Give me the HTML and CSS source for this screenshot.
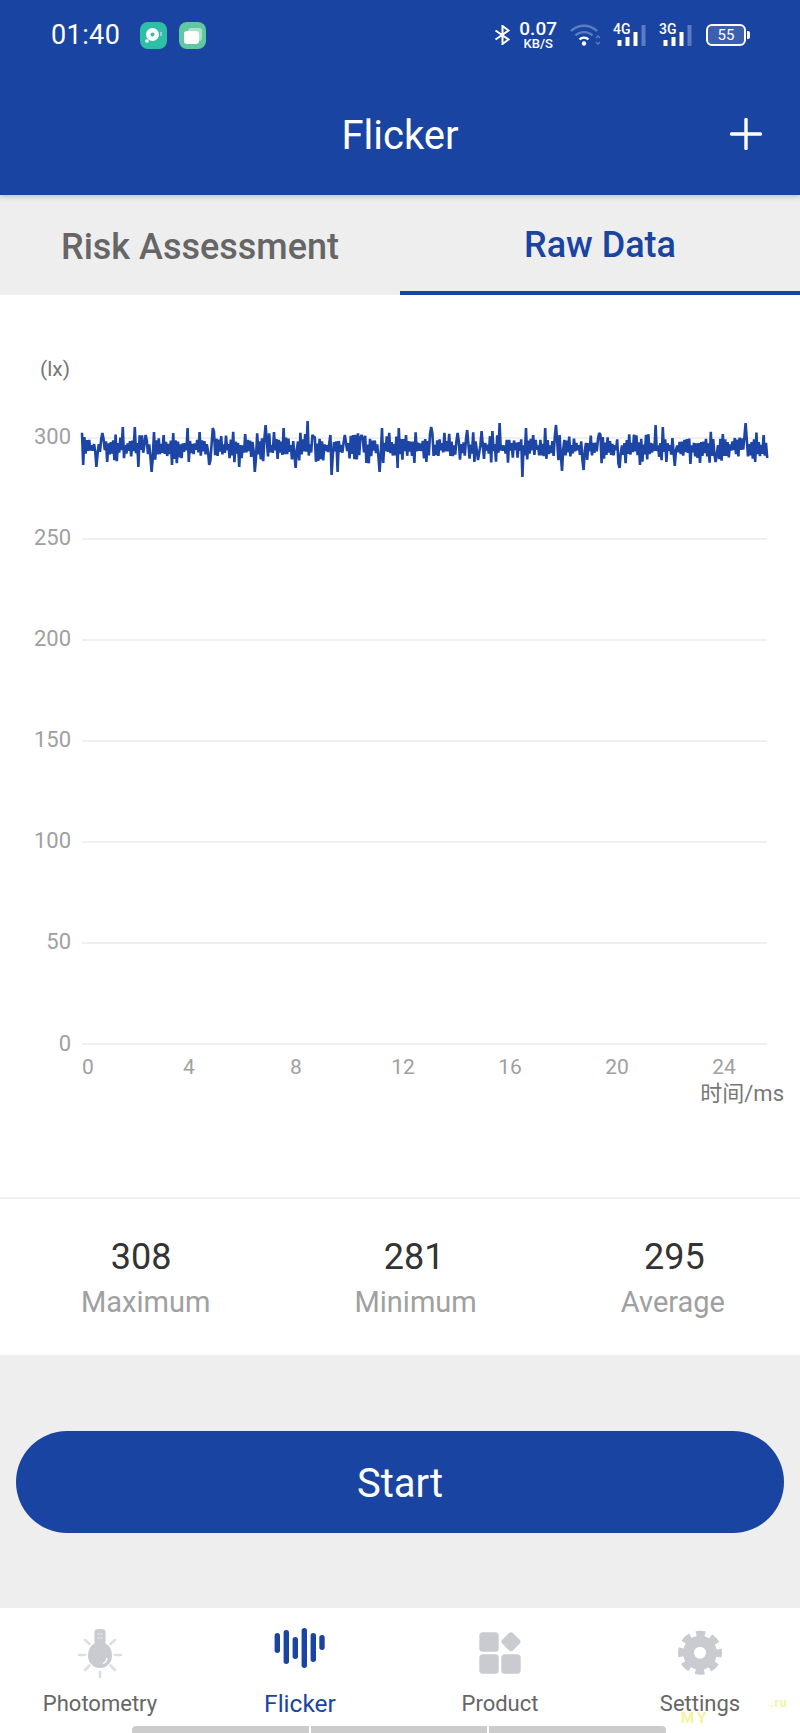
FILE: index.html
```html
<!DOCTYPE html>
<html lang="en">
<head>
  <meta charset="utf-8">
  <title>Flicker</title>
  <meta name="viewport" content="width=device-width, initial-scale=1.0">
  <link rel="stylesheet" href="styles.css">
</head>
<body>
  <div class="phone">
    <header class="top">
      <!-- status bar -->
      <div class="status">
        <div class="status-left">
          <span class="clock">01:40</span>
          <svg class="app-icon" viewBox="0 0 27 27">
            <rect width="27" height="27" rx="8" fill="#2fbfa6"/>
            <circle cx="12.5" cy="12.5" r="6.5" fill="#fff"/>
            <circle cx="12.5" cy="12.5" r="2" fill="#2fbfa6"/>
            <circle cx="7" cy="19" r="1.8" fill="#fff"/>
            <rect x="20.5" y="10" width="1" height="4" fill="#d8f5ef"/>
          </svg>
          <svg class="app-icon" viewBox="0 0 27 27">
            <rect width="27" height="27" rx="8" fill="#5fc8a0"/>
            <rect x="9" y="6" width="14" height="13" rx="3" fill="#a6e3cb"/>
            <rect x="5" y="9" width="15" height="13" rx="3" fill="#fff"/>
          </svg>
        </div>
        <div class="status-right">
          <svg class="bt" viewBox="0 0 17 20">
            <path d="M1.5 5.5 L14.5 14.5 L8.5 19 V1 L14.5 5.5 L1.5 14.5" fill="none" stroke="#fff" stroke-width="2"/>
          </svg>
          <div class="speed">
            <span class="speed-num">0.07</span>
            <span class="speed-unit">KB/S</span>
          </div>
          <svg class="wifi" viewBox="0 0 30 22">
            <path d="M1 7 C8 0 20 0 27 7" fill="none" stroke="#5c7dc3" stroke-width="2.4"/>
            <path d="M5.5 11.5 C10 7 18 7 22.5 11.5" fill="none" stroke="#5c7dc3" stroke-width="2.4"/>
            <path d="M9.5 15.5 C12 13 16 13 18.5 15.5" fill="none" stroke="#fff" stroke-width="2.4"/>
            <circle cx="14" cy="19.5" r="2.2" fill="#fff"/>
            <path d="M26 14 l2 -2 l2 2 M26 18 l2 2 l2 -2" fill="none" stroke="#5c7dc3" stroke-width="1.4"/>
          </svg>
          <div class="signal">
            <span class="signal-text">4G</span>
            <svg class="signal-bars" viewBox="0 0 34 23">
              <rect x="4.5" y="16" width="4" height="6" fill="#fff"/>
              <rect x="12.5" y="13" width="4" height="9" fill="#fff"/>
              <rect x="20.5" y="8" width="4" height="14" fill="#fff"/>
              <rect x="28.5" y="1" width="4" height="21" fill="#5c7dc3"/>
            </svg>
          </div>
          <div class="signal">
            <span class="signal-text">3G</span>
            <svg class="signal-bars" viewBox="0 0 34 23">
              <rect x="4.5" y="16" width="4" height="6" fill="#fff"/>
              <rect x="12.5" y="13" width="4" height="9" fill="#fff"/>
              <rect x="20.5" y="8" width="4" height="14" fill="#fff"/>
              <rect x="28.5" y="1" width="4" height="21" fill="#5c7dc3"/>
            </svg>
          </div>
          <div class="battery"><span class="battery-level">55</span></div>
        </div>
      </div>
      <!-- title bar -->
      <div class="appbar">
        <h1 class="title">Flicker</h1>
        <svg class="plus" viewBox="0 0 32 32">
          <path d="M16 1.5 V30.5 M1.5 16 H30.5" stroke="#fff" stroke-width="3.4" stroke-linecap="round"/>
        </svg>
      </div>
    </header>

    <nav class="tabs">
      <div class="tab">Risk Assessment</div>
      <div class="tab tab-active">Raw Data</div>
    </nav>

    <!-- chart; the trace is filled in by chart.js -->
    <section class="chart">
      <svg class="chart-svg" viewBox="0 0 800 902">
        <g class="grid">
          <line x1="82" x2="767" y1="143" y2="143"/>
          <line x1="82" x2="767" y1="244" y2="244"/>
          <line x1="82" x2="767" y1="345" y2="345"/>
          <line x1="82" x2="767" y1="446" y2="446"/>
          <line x1="82" x2="767" y1="547" y2="547"/>
          <line x1="82" x2="767" y1="648" y2="648"/>
          <line x1="82" x2="767" y1="749" y2="749"/>
        </g>
        <text class="unit" x="40" y="81">(lx)</text>
        <g class="y-labels">
          <text x="71" y="149">300</text>
          <text x="71" y="250">250</text>
          <text x="71" y="351">200</text>
          <text x="71" y="452">150</text>
          <text x="71" y="553">100</text>
          <text x="71" y="654">50</text>
          <text x="71" y="756">0</text>
        </g>
        <g class="x-labels">
          <text x="88" y="779">0</text>
          <text x="189" y="779">4</text>
          <text x="296" y="779">8</text>
          <text x="403" y="779">12</text>
          <text x="510" y="779">16</text>
          <text x="617" y="779">20</text>
          <text x="724" y="779">24</text>
        </g>
        <text class="x-unit" x="784" y="806">时间/ms</text>
        <polyline id="trace" class="trace" points=""/>
      </svg>
    </section>

    <section class="stats">
      <div class="stat"><span class="stat-value">308</span><span class="stat-label">Maximum</span></div>
      <div class="stat"><span class="stat-value">281</span><span class="stat-label">Minimum</span></div>
      <div class="stat"><span class="stat-value">295</span><span class="stat-label">Average</span></div>
    </section>

    <main class="action">
      <button class="start">Start</button>
    </main>

    <footer class="bottom-nav">
      <div class="nav-item">
        <svg class="nav-icon" viewBox="0 0 60 60">
          <g stroke="#dcdde1" stroke-width="2.6" stroke-linecap="round">
            <path d="M9 33 H15 M45 33 H51 M15 18 L19.5 22 M45 18 L40.5 22 M15 48 L19.5 43.5 M45 48 L40.5 43.5 M30 50 V55"/>
          </g>
          <path d="M24.5 9 Q24.5 7 30 7 Q35.5 7 35.5 9 V21.5 Q42 25 42 34 A12 12 0 0 1 18 34 Q18 25 24.5 21.5 Z" fill="#c9cbd1"/>
          <path d="M27 12 H33 M27 16 H33" stroke="#e6e7ea" stroke-width="1"/>
          <path d="M37 36 Q36.5 40 33 41.5" fill="none" stroke="#fff" stroke-width="1.4"/>
        </svg>
        <span class="nav-label">Photometry</span>
      </div>
      <div class="nav-item nav-active">
        <svg class="nav-icon" viewBox="0 0 60 60">
          <g fill="#1a44a1">
            <rect x="4.6" y="11" width="5.4" height="20" rx="2.7"/>
            <rect x="13.6" y="8" width="5.4" height="34" rx="2.7"/>
            <rect x="22.6" y="15" width="5.4" height="22" rx="2.7"/>
            <rect x="31.6" y="6" width="5.4" height="40" rx="2.7"/>
            <rect x="40.6" y="11" width="5.4" height="29" rx="2.7"/>
            <rect x="49.3" y="13" width="5.4" height="15" rx="2.7"/>
          </g>
        </svg>
        <span class="nav-label">Flicker</span>
      </div>
      <div class="nav-item">
        <svg class="nav-icon" viewBox="0 0 60 60">
          <g fill="#c9cbd1">
            <rect x="9.3" y="10.3" width="19.4" height="19.4" rx="3.5"/>
            <rect x="9.3" y="32.3" width="19.4" height="19.4" rx="3.5"/>
            <rect x="31.3" y="32.3" width="19.4" height="19.4" rx="3.5"/>
            <rect x="33.5" y="12.2" width="15" height="15" rx="3" transform="rotate(45 41 19.7)"/>
          </g>
        </svg>
        <span class="nav-label">Product</span>
      </div>
      <div class="nav-item">
        <svg class="nav-icon" viewBox="0 0 60 60">
          <circle cx="30" cy="30.7" r="17" fill="#c9cbd1"/>
          <circle cx="30" cy="30.7" r="19" fill="none" stroke="#c9cbd1" stroke-width="6" stroke-dasharray="9 5.92" stroke-dashoffset="4.5"/>
          <circle cx="30" cy="30.7" r="6" fill="#fff"/>
        </svg>
        <span class="nav-label">Settings</span>
      </div>
      <!-- home indicator + photo watermark sit over the nav -->
      <div class="home-bar">
        <span class="home-seg"></span>
        <span class="home-seg"></span>
        <span class="home-seg"></span>
      </div>
      <span class="mark">MY</span>
      <span class="mark mark-ru">.ru</span>
    </footer>
  </div>
  <script src="chart.js"></script>
</body>
</html>
```

FILE: styles.css
```css
* {
  box-sizing: border-box;
}
body {
  margin: 0;
  padding: 0;
  font-family: Roboto, "Noto Sans CJK SC", sans-serif;
  background: #fff;
}
.phone {
  width: 800px;
  height: 1733px;
  display: flex;
  flex-direction: column;
  overflow: hidden;
}

/* header */
.top {
  height: 195px;
  background: #1a44a1;
  color: #fff;
  box-shadow: 0 2px 5px rgba(0,0,0,0.18);
  position: relative;
}
.status {
  height: 70px;
  display: flex;
  justify-content: space-between;
  align-items: center;
  padding: 0 54px 0 51px;
}
.status-left {
  display: flex;
  align-items: center;
  gap: 12px;
}
.clock {
  font-size: 27px;
  margin-right: 8px;
  letter-spacing: 0.4px;
}
.app-icon {
  width: 27px;
  height: 27px;
}
.status-right {
  display: flex;
  align-items: center;
}
.bt {
  width: 17px;
  height: 20px;
}
.speed {
  display: flex;
  flex-direction: column;
  align-items: center;
  margin-left: 8px;
  font-weight: 500;
}
.speed-num {
  font-size: 19px;
  line-height: 17px;
}
.speed-unit {
  font-size: 13px;
  line-height: 13px;
}
.wifi {
  width: 30px;
  height: 22px;
  margin-left: 13px;
}
.signal {
  width: 34px;
  height: 23px;
  margin-left: 13px;
  position: relative;
}
.signal + .signal {
  margin-left: 12px;
}
.signal-bars {
  display: block;
  width: 34px;
  height: 23px;
}
.signal-text {
  position: absolute;
  left: 0;
  top: -2px;
  font-size: 14px;
  line-height: 14px;
  font-weight: 500;
}
.battery {
  width: 40px;
  height: 22px;
  margin-left: 13px;
  border: 2px solid #fff;
  border-radius: 6px;
  background: #3c5fb0;
  position: relative;
  display: flex;
  align-items: center;
  justify-content: center;
}
.battery::after {
  content: "";
  position: absolute;
  right: -6px;
  top: 5px;
  width: 3px;
  height: 8px;
  background: #fff;
  border-radius: 0 2px 2px 0;
}
.battery-level {
  font-size: 15px;
  line-height: 1;
}
.appbar {
  height: 125px;
  display: flex;
  align-items: center;
  justify-content: center;
  padding-top: 6px;
  position: relative;
}
.title {
  margin: 0;
  font-size: 40px;
  font-weight: 400;
}
.plus {
  position: absolute;
  right: 38px;
  top: 48px;
  width: 32px;
  height: 32px;
}

/* tabs */
.tabs {
  height: 100px;
  display: flex;
  background: #eeeeee;
}
.tab {
  flex: 1;
  display: flex;
  align-items: center;
  justify-content: center;
  font-size: 36px;
  font-weight: 500;
  color: #666;
  padding-top: 3px;
}
.tab-active {
  color: #1a44a1;
  border-bottom: 4px solid #1a44a1;
}

/* chart */
.chart {
  height: 902px;
  background: #fff;
}
.chart-svg {
  display: block;
  width: 800px;
  height: 902px;
}
.grid line {
  stroke: #f0f0f0;
  stroke-width: 2;
}
.unit {
  font-size: 21px;
  fill: #777;
}
.y-labels text {
  font-size: 22px;
  fill: #a0a0a0;
  text-anchor: end;
}
.x-labels text {
  font-size: 21px;
  fill: #a0a0a0;
  text-anchor: middle;
}
.x-unit {
  font-size: 22px;
  fill: #777;
  text-anchor: end;
}
.trace {
  fill: none;
  stroke: #1c45a5;
  stroke-width: 2.6;
  stroke-linejoin: bevel;
}

/* min / max / avg */
.stats {
  height: 158px;
  background: #fff;
  border-top: 2px solid #f0f0f0;
  display: flex;
  justify-content: space-between;
  align-items: flex-start;
  padding: 36px 75px 0 81px;
}
.stat {
  display: flex;
  flex-direction: column;
  align-items: center;
}
.stat-value {
  font-size: 36px;
  line-height: 44px;
  color: #333;
  padding-right: 3px;
}
.stat:first-child .stat-value {
  padding-right: 9px;
}
.stat:last-child .stat-value {
  padding-right: 0;
  padding-left: 3px;
}
.stat-label {
  font-size: 29px;
  line-height: 44px;
  color: #a0a0a0;
  margin-top: 1px;
}

/* start button */
.action {
  flex: 1;
  background: #eeeeee;
  padding: 76px 16px 0;
}
.start {
  display: block;
  width: 100%;
  height: 102px;
  border: none;
  border-radius: 51px;
  background: #1a44a1;
  color: #fff;
  font-family: inherit;
  font-size: 40px;
  padding-top: 4px;
}

/* bottom nav */
.bottom-nav {
  height: 125px;
  background: #fff;
  display: flex;
  position: relative;
}
.nav-item {
  flex: 1;
  display: flex;
  flex-direction: column;
  align-items: center;
  padding-top: 14px;
}
.nav-icon {
  width: 60px;
  height: 60px;
}
.nav-label {
  font-size: 22px;
  line-height: 22px;
  margin-top: 11px;
  color: #666;
}
.nav-active .nav-label {
  color: #1a44a1;
  font-size: 24.5px;
}
.home-bar {
  position: absolute;
  left: 132px;
  bottom: 0;
  width: 534px;
  height: 7px;
  display: flex;
  gap: 2px;
}
.home-seg {
  flex: 1;
  background: #cccccc;
}
.home-seg:first-child {
  border-radius: 4px 0 0 0;
}
.home-seg:last-child {
  border-radius: 0 4px 0 0;
}
.mark {
  position: absolute;
  left: 681px;
  top: 105px;
  font-size: 15px;
  line-height: 10px;
  letter-spacing: 3px;
  font-weight: 700;
  color: #f5f3a0;
}
.mark-ru {
  left: 770px;
  top: 90px;
  font-size: 12px;
  letter-spacing: 1px;
}
```

FILE: chart.js
```js
// Flicker trace: noise around 295 lx with the visible peaks pinned
const trace = document.getElementById("trace");

const spikes = [
  [84,437],[96,432],[102,433],[123,427],[135,427],[146,435],[154,432],[163,435],
  [173,433],[187,428],[200,432],[213,428],[245,434],[266,425],[274,432],[283,428],
  [296,427],[307,421],[313,437],[330,435],[345,435],[362,435],[382,428],[399,428],
  [431,427],[457,433],[467,430],[482,431],[492,431],[499,423],[526,428],[545,428],
  [556,425],[584,425],[599,433],[655,425],[663,427],[746,423],[763,435],
  [83,465],[96,467],[107,462],[138,467],[151,472],[172,465],[209,465],[239,467],
  [255,472],[295,468],[332,475],[337,472],[380,472],[398,468],[478,460],[522,477],
  [562,471],[583,470],[619,468],[640,465],[675,466],[690,464],[715,462],[767,458]
];

// small repeatable random generator so the line is the same on every load
let seed = 12345;
function rnd() {
  seed = (seed * 16807) % 2147483647;
  return seed / 2147483647;
}

const step = 1.2;
const count = Math.round((767 - 82) / step);
const ys = [];
let sign = 1;
for (let i = 0; i <= count; i++) {
  sign = -sign;
  // most samples stay in the dense band, some reach out of it
  const reach = rnd() < 0.25 ? 9 + rnd() * 7 : 2 + rnd() * 7;
  ys.push(447.5 + sign * reach);
}

spikes.forEach(([x, y]) => {
  const i = Math.min(count, Math.round((x - 82) / step));
  ys[i] = y;
});

// svg starts 295px down the page
trace.setAttribute(
  "points",
  ys.map((y, i) => (82 + i * step).toFixed(1) + "," + (y - 295).toFixed(1)).join(" ")
);
```
